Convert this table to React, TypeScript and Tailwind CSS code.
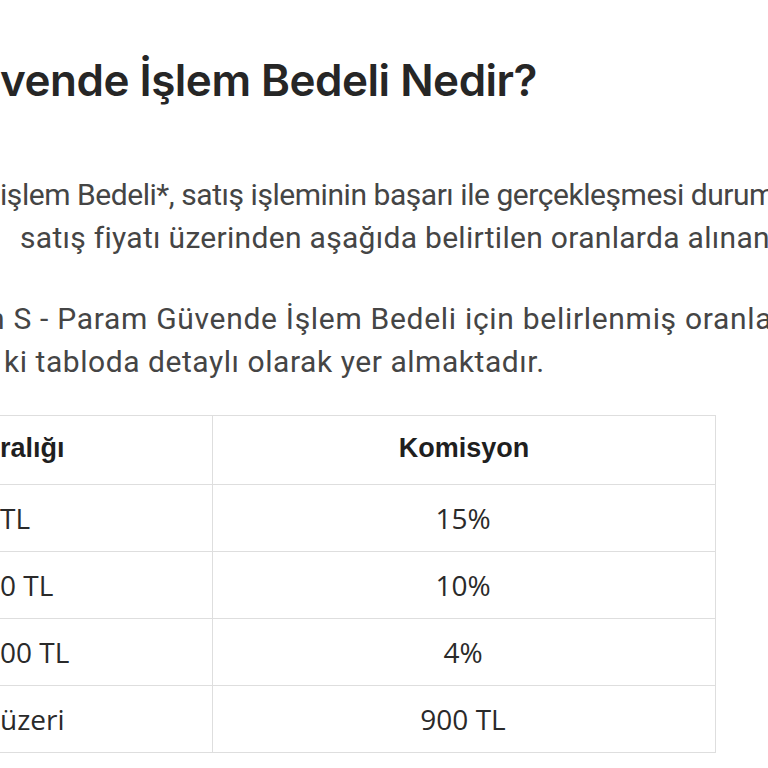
const rows = [
  { range: 'TL', fee: '15%' },
  { range: '0 TL', fee: '10%' },
  { range: '00 TL', fee: '4%' },
  { range: 'üzeri', fee: '900 TL' },
];

const body = { fontFamily: 'Roboto, "Liberation Sans", sans-serif' };

export default function App() {
  return (
    <div className="w-[768px] h-[768px] overflow-hidden bg-white">
      <h1
        className="pt-[52px] whitespace-nowrap text-[44px] leading-[56px] font-semibold text-[#262626] tracking-[-0.5px]"
        style={{ fontFamily: 'Inter, "Noto Sans", sans-serif' }}
      >
        vende İşlem Bedeli Nedir?
      </h1>

      <div className="mt-[65px] text-[30px] leading-[43px] text-[#454545] whitespace-nowrap" style={body}>
        <p className="tracking-[-0.45px]">işlem Bedeli*, satış işleminin başarı ile gerçekleşmesi durumunda</p>
        <p className="pl-[20px] tracking-[0.3px]">satış fiyatı üzerinden aşağıda belirtilen oranlarda alınan bedeldir.</p>
      </div>

      <div className="mt-[38px] text-[30px] leading-[43px] text-[#454545] whitespace-nowrap" style={body}>
        <p className="-ml-[12px] tracking-[0.7px]">n S - Param Güvende İşlem Bedeli için belirlenmiş oranlar</p>
        <p className="pl-[4px] tracking-[0.55px]">ki tabloda detaylı olarak yer almaktadır.</p>
      </div>

      <div className="mt-[32px] w-[716px] border-t border-r border-[#dedede]">
        <div
          className="grid grid-cols-[213px_1fr] h-[69px] border-b border-[#dedede] text-[27px] font-bold text-[#1f1f1f]"
          style={{ fontFamily: '"Liberation Sans", Arial, sans-serif' }}
        >
          <div className="flex items-center pb-[3px] border-r border-[#dedede]">ralığı</div>
          <div className="flex items-center justify-center pb-[3px]">Komisyon</div>
        </div>
        {rows.map((r, i) => (
          <div
            key={i}
            className="grid grid-cols-[213px_1fr] h-[67px] border-b border-[#dedede] text-[28px] text-[#2a2a2a]"
            style={{ fontFamily: '"Open Sans", "Noto Sans", sans-serif' }}
          >
            <div className="flex items-center border-r border-[#dedede]">{r.range}</div>
            <div className="flex items-center justify-center pr-[2px]">{r.fee}</div>
          </div>
        ))}
      </div>
    </div>
  );
}
